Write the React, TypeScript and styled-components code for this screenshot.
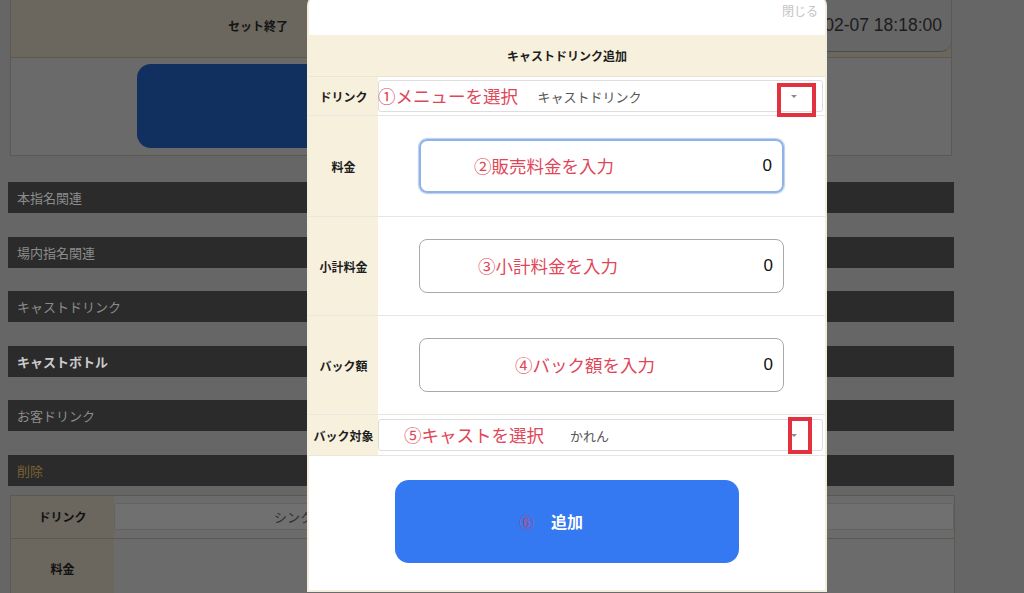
import styled, { createGlobalStyle } from "styled-components";

const GlobalStyle = createGlobalStyle`
  html, body {
    margin: 0;
    padding: 0;
    background: rgb(102, 102, 102);
    font-family: "Liberation Sans", "Noto Sans CJK JP", sans-serif;
    overflow: hidden;
  }
  #root {
    position: relative;
    width: 1024px;
    height: 593px;
    overflow: hidden;
  }
`;

type Tone = "normal" | "strong" | "danger";

const sections: { title: string; tone: Tone }[] = [
  { title: "本指名関連", tone: "normal" },
  { title: "場内指名関連", tone: "normal" },
  { title: "キャストドリンク", tone: "normal" },
  { title: "キャストボトル", tone: "strong" },
  { title: "お客ドリンク", tone: "normal" },
  { title: "削除", tone: "danger" },
];

export default function App() {
  return (
    <>
      <GlobalStyle />
      <Page>
        <TopPanel>
          <HeaderRow>
            <HeaderCell>セット終了</HeaderCell>
            <TimeBox>02-07 18:18:00</TimeBox>
          </HeaderRow>
          <ActionRow>
            <DarkButton />
          </ActionRow>
        </TopPanel>

        <SectionList>
          {sections.map((s) => (
            <SectionBar key={s.title} $tone={s.tone}>
              {s.title}
            </SectionBar>
          ))}
        </SectionList>

        <EditTable>
          <EditRow $height={42}>
            <EditLabel>ドリンク</EditLabel>
            <EditValue>
              <DimSelect>シンク</DimSelect>
            </EditValue>
          </EditRow>
          <EditRow $height={60}>
            <EditLabel>料金</EditLabel>
            <EditValue />
          </EditRow>
        </EditTable>
      </Page>

      <Modal>
        <CloseRow>閉じる</CloseRow>
        <ModalHeader>キャストドリンク追加</ModalHeader>

        <FormRow $height={39}>
          <FormLabel>ドリンク</FormLabel>
          <FormValue>
            <Select>
              キャストドリンク
              <Note $left={-1}>①メニューを選択</Note>
              <Caret />
              <RedMark $left={398} $top={2} $width={39} $height={34} />
            </Select>
          </FormValue>
        </FormRow>

        <FormRow $height={101}>
          <FormLabel>料金</FormLabel>
          <FormValue>
            <AmountBox $focused>
              <Note $left={53}>②販売料金を入力</Note>0
            </AmountBox>
          </FormValue>
        </FormRow>

        <FormRow $height={99}>
          <FormLabel>小計料金</FormLabel>
          <FormValue>
            <AmountBox>
              <Note $left={58}>③小計料金を入力</Note>0
            </AmountBox>
          </FormValue>
        </FormRow>

        <FormRow $height={99}>
          <FormLabel>バック額</FormLabel>
          <FormValue>
            <AmountBox>
              <Note $left={95}>④バック額を入力</Note>0
            </AmountBox>
          </FormValue>
        </FormRow>

        <FormRow $height={41}>
          <FormLabel>バック対象</FormLabel>
          <FormValue>
            <Select>
              かれん
              <Note $left={25}>⑤キャストを選択</Note>
              <Caret />
              <RedMark $left={409} $top={-3} $width={24} $height={37} />
            </Select>
          </FormValue>
        </FormRow>

        <ButtonArea>
          <AddButton>
            <StepMark>⑥</StepMark>
            追加
          </AddButton>
        </ButtonArea>
      </Modal>
    </>
  );
}

/* ---------- dimmed page behind the dialog ---------- */

const Page = styled.div`
  width: 1024px;
  height: 593px;
  overflow: hidden;
  background: rgb(102, 102, 102);
`;

const TopPanel = styled.div`
  margin-left: 10px;
  width: 942px;
  box-sizing: border-box;
  border: 1px solid rgb(92, 89, 80);
  border-top: none;
  background: rgb(106, 106, 106);
`;

const HeaderRow = styled.div`
  display: flex;
  align-items: flex-start;
  height: 57px;
  background: rgb(107, 103, 94);
  border-bottom: 1px solid rgb(92, 89, 80);
`;

const HeaderCell = styled.div`
  width: 494px;
  height: 50px;
  display: flex;
  align-items: center;
  justify-content: center;
  font-size: 12px;
  font-weight: bold;
  color: #141414;
`;

const TimeBox = styled.div`
  margin-left: auto;
  width: 220px;
  height: 52px;
  box-sizing: border-box;
  display: flex;
  align-items: center;
  justify-content: flex-end;
  padding-right: 9px;
  background: rgb(102, 102, 102);
  border: 1px solid rgb(76, 76, 76);
  border-top: none;
  border-right: none;
  border-radius: 0 0 10px 10px;
  font-size: 17.5px;
  color: #1c1c1c;
  white-space: nowrap;
`;

const ActionRow = styled.div`
  height: 97px;
  box-sizing: border-box;
  padding: 6px 0 0 126px;
`;

const DarkButton = styled.div`
  width: 520px;
  height: 84px;
  border-radius: 14px;
  background: rgb(17, 48, 95);
`;

const SectionList = styled.div`
  display: flex;
  flex-direction: column;
  gap: 23.6px;
  margin: 26px 0 0 8px;
  width: 946px;
`;

const SectionBar = styled.div<{ $tone: Tone }>`
  height: 31px;
  display: flex;
  align-items: center;
  padding-left: 9px;
  background: rgb(43, 43, 43);
  font-size: 13px;
  font-weight: ${(p) => (p.$tone === "strong" ? "bold" : "normal")};
  color: ${(p) =>
    p.$tone === "strong"
      ? "rgb(203, 203, 203)"
      : p.$tone === "danger"
      ? "rgb(124, 98, 51)"
      : "rgb(140, 140, 140)"};
`;

const EditTable = styled.div`
  margin: 9px 0 0 10px;
  width: 943px;
  border: 1px solid rgb(92, 89, 80);
  border-bottom: none;
`;

const EditRow = styled.div<{ $height: number }>`
  display: flex;
  height: ${(p) => p.$height}px;
  border-bottom: 1px solid rgb(92, 89, 80);
`;

const EditLabel = styled.div`
  width: 103px;
  display: flex;
  align-items: center;
  justify-content: center;
  background: rgb(107, 103, 94);
  font-size: 12px;
  font-weight: bold;
  color: #121212;
`;

const EditValue = styled.div`
  flex: 1;
  display: flex;
  align-items: center;
  background: rgb(107, 107, 107);
`;

const DimSelect = styled.div`
  width: 100%;
  height: 27px;
  box-sizing: border-box;
  display: flex;
  align-items: center;
  padding-left: 159px;
  background: rgb(112, 112, 112);
  border: 1px solid rgb(99, 99, 99);
  border-radius: 2px;
  font-size: 13px;
  color: rgb(46, 46, 46);
`;

/* ---------- dialog ---------- */

const Modal = styled.div`
  position: absolute;
  top: -6px;
  left: 307px;
  width: 520px;
  height: 598px;
  box-sizing: border-box;
  display: flex;
  flex-direction: column;
  background: #ffffff;
  border: 2px solid #f3eddb;
  border-top: none;
  border-radius: 12px 12px 0 0;
  overflow: hidden;
`;

const CloseRow = styled.div`
  height: 41px;
  box-sizing: border-box;
  display: flex;
  justify-content: flex-end;
  padding: 10px 7px 0 0;
  font-size: 12px;
  line-height: 16px;
  color: #c4c4c4;
`;

const ModalHeader = styled.div`
  height: 42px;
  display: flex;
  align-items: center;
  justify-content: center;
  background: #f7f0dd;
  border-bottom: 1px solid #ece5d1;
  box-sizing: border-box;
  font-size: 12px;
  font-weight: bold;
  color: #1e1e1e;
`;

const FormRow = styled.div<{ $height: number }>`
  display: flex;
  height: ${(p) => p.$height}px;
  box-sizing: border-box;
  border-bottom: 1px solid #e9e6de;
`;

const FormLabel = styled.div`
  width: 69px;
  flex-shrink: 0;
  display: flex;
  align-items: center;
  justify-content: center;
  background: #f7f0dd;
  font-size: 12px;
  font-weight: bold;
  color: #1e1e1e;
  white-space: nowrap;
`;

const FormValue = styled.div`
  flex: 1;
  display: flex;
  align-items: center;
`;

const Select = styled.div`
  position: relative;
  width: 445px;
  height: 32px;
  box-sizing: border-box;
  display: flex;
  align-items: center;
  justify-content: center;
  padding-right: 22px;
  border: 1px solid #dddddd;
  border-radius: 3px;
  font-size: 13px;
  color: #555555;
`;

const Caret = styled.span`
  position: absolute;
  right: 25px;
  top: 50%;
  margin-top: -1px;
  width: 0;
  height: 0;
  border-left: 3px solid transparent;
  border-right: 3px solid transparent;
  border-top: 3px solid #8a8a8a;
`;

const RedMark = styled.span<{ $left: number; $top: number; $width: number; $height: number }>`
  position: absolute;
  left: ${(p) => p.$left}px;
  top: ${(p) => p.$top}px;
  width: ${(p) => p.$width}px;
  height: ${(p) => p.$height}px;
  box-sizing: border-box;
  border: 4px solid #e3323f;
`;

const Note = styled.span<{ $left: number }>`
  position: absolute;
  left: ${(p) => p.$left}px;
  top: 50%;
  transform: translateY(-50%);
  font-family: "Noto Sans CJK JP", sans-serif;
  font-size: 17.5px;
  line-height: 1;
  color: #df4758;
  white-space: nowrap;
`;

const AmountBox = styled.div<{ $focused?: boolean }>`
  position: relative;
  margin-left: 41px;
  width: 365px;
  height: 54px;
  box-sizing: border-box;
  display: flex;
  align-items: center;
  justify-content: flex-end;
  padding-right: 10px;
  border: ${(p) => (p.$focused ? "2px solid #8fb3e6" : "1px solid #a9a9a9")};
  border-radius: 8px;
  box-shadow: ${(p) => (p.$focused ? "0 0 1px 1px rgba(130, 170, 230, 0.55)" : "none")};
  font-size: 17px;
  color: #111111;
`;

const ButtonArea = styled.div`
  flex: 1;
  display: flex;
  align-items: center;
  justify-content: center;
  padding-bottom: 4px;
`;

const AddButton = styled.div`
  position: relative;
  width: 344px;
  height: 83px;
  display: flex;
  align-items: center;
  justify-content: center;
  border-radius: 14px;
  background: #3478f2;
  font-size: 16px;
  font-weight: bold;
  color: #ffffff;
`;

const StepMark = styled.span`
  position: absolute;
  left: 124px;
  top: 50%;
  transform: translateY(-50%);
  font-family: "Noto Sans CJK JP", sans-serif;
  font-size: 15px;
  font-weight: normal;
  color: #c2456f;
`;
